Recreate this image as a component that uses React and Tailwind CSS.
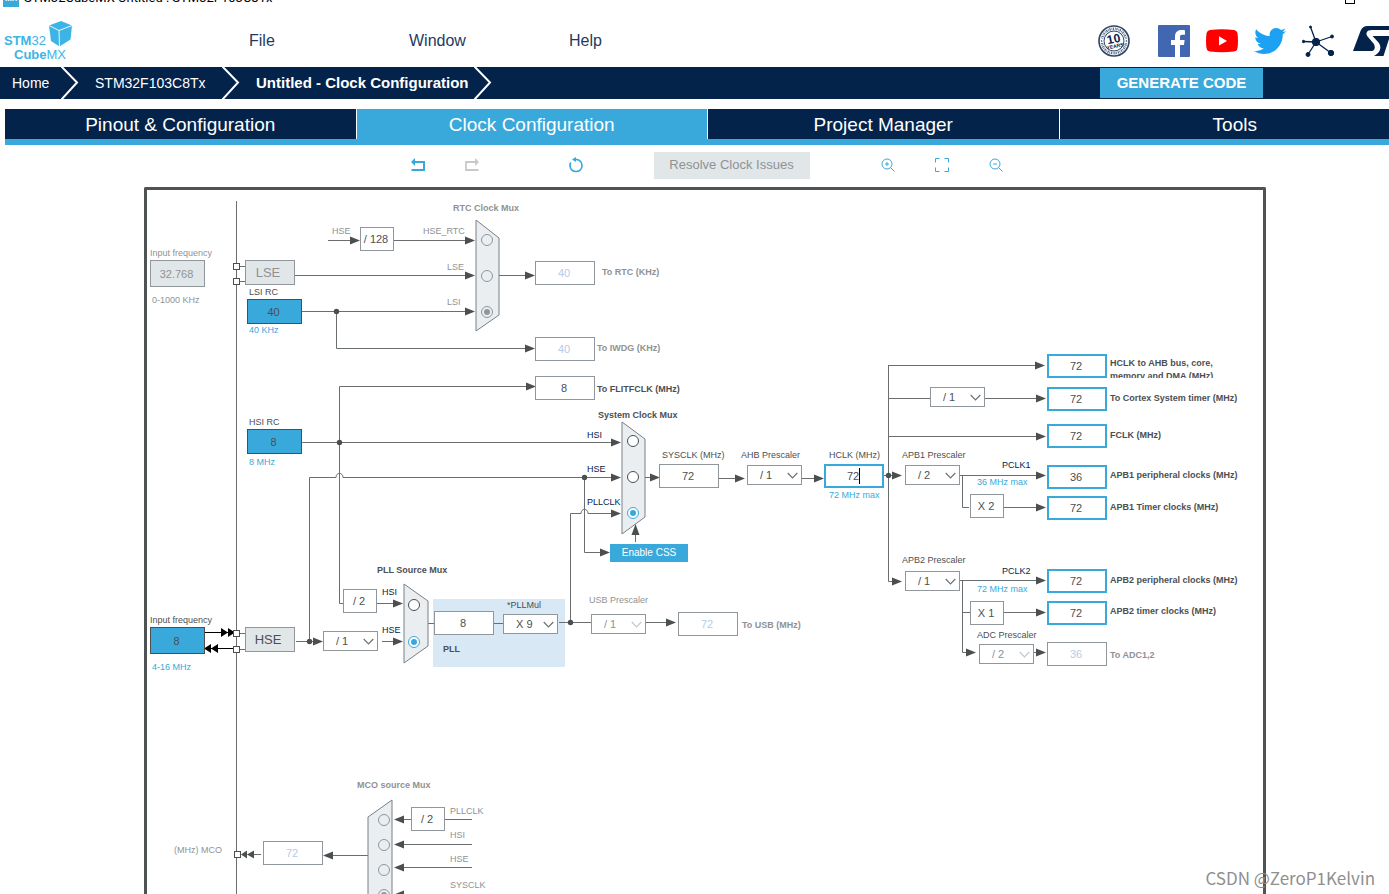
import React, { useState } from 'react'
import { FaTwitter } from 'react-icons/fa'

// top left corner of the board inside its frame
const ORIGIN = { x: 147, y: 190 };

const TONES = {
  dark: "text-[#4c4f52]",
  gray: "text-[#8f9295]",
  navy: "text-[#03234b]",
  blue: "text-[#39a9dc]",
};

const BOX_STYLES = {
  source: "bg-[#39a9dc] border border-[#4c4f52] text-[#4c4f52]",
  disabled: "bg-[#e1e6e9] border border-[#8f979d] text-[#8f9295]",
  plain: "bg-white border border-[#8f979d] text-[#4c4f52]",
  faded: "bg-white border border-[#8f979d] text-[#b4cce6]",
  output: "bg-white border-2 border-[#39a9dc] text-[#4c4f52]",
};

const VALUES = [
  { id: "lse-freq", x: 150, y: 260, w: 55, h: 27, value: "32.768", kind: "disabled" },
  { id: "lsi-rc", x: 247, y: 299, w: 55, h: 25, value: "40", kind: "source" },
  { id: "hsi-rc", x: 247, y: 429, w: 55, h: 25, value: "8", kind: "source" },
  { id: "hse-freq", x: 150, y: 627, w: 55, h: 27, value: "8", kind: "source" },
  { id: "rtc", x: 535, y: 261, value: "40", kind: "faded" },
  { id: "iwdg", x: 535, y: 337, value: "40", kind: "faded" },
  { id: "flitfclk", x: 535, y: 376, value: "8", kind: "plain" },
  { id: "sysclk", x: 659, y: 464, value: "72", kind: "plain" },
  { id: "hclk", x: 824, y: 464, value: "72", kind: "output" },
  { id: "pll-in", x: 434, y: 611, value: "8", kind: "plain" },
  { id: "usb", x: 678, y: 612, value: "72", kind: "faded" },
  { id: "ahb-bus", x: 1047, y: 354, value: "72", kind: "output" },
  { id: "cortex", x: 1047, y: 387, value: "72", kind: "output" },
  { id: "fclk", x: 1047, y: 424, value: "72", kind: "output" },
  { id: "apb1-per", x: 1047, y: 465, value: "36", kind: "output" },
  { id: "apb1-tim", x: 1047, y: 496, value: "72", kind: "output" },
  { id: "apb2-per", x: 1047, y: 569, value: "72", kind: "output" },
  { id: "apb2-tim", x: 1047, y: 601, value: "72", kind: "output" },
  { id: "adc", x: 1047, y: 642, value: "36", kind: "faded" },
  { id: "mco", x: 263, y: 841, value: "72", kind: "faded" },
];

const SELECTS = [
  { id: "ahb-pre", x: 747, y: 465, options: ["/ 1", "/ 2", "/ 4", "/ 8"], value: "/ 1" },
  { id: "apb1-pre", x: 905, y: 465, options: ["/ 1", "/ 2", "/ 4", "/ 8"], value: "/ 2" },
  { id: "cortex-pre", x: 930, y: 387, options: ["/ 1", "/ 8"], value: "/ 1", name: "Cortex prescaler" },
  { id: "apb2-pre", x: 905, y: 571, options: ["/ 1", "/ 2", "/ 4", "/ 8"], value: "/ 1" },
  { id: "pll-mul", x: 503, y: 614, options: ["X 2", "X 4", "X 8", "X 9"], value: "X 9" },
  { id: "hse-pre", x: 323, y: 631, options: ["/ 1", "/ 2"], value: "/ 1", name: "HSE prescaler" },
  { id: "usb-pre", x: 591, y: 614, options: ["/ 1", "/ 1.5"], value: "/ 1", disabled: true },
  { id: "adc-pre", x: 979, y: 644, options: ["/ 2", "/ 4"], value: "/ 2", disabled: true },
];

const FIXED = [
  { x: 360, y: 227, text: "/ 128" },
  { x: 343, y: 589, text: "/ 2" },
  { x: 970, y: 494, text: "X 2" },
  { x: 970, y: 601, text: "X 1" },
  { x: 411, y: 807, text: "/ 2" },
];

// y is the middle of the line of text
const LABELS = [
  { x: 453, y: 208, text: "RTC Clock Mux", tone: "gray", bold: true },
  { x: 598, y: 415, text: "System Clock Mux", tone: "dark", bold: true },
  { x: 377, y: 570, text: "PLL Source Mux", tone: "dark", bold: true },
  { x: 357, y: 785, text: "MCO source Mux", tone: "gray", bold: true },
  { x: 443, y: 649, text: "PLL", tone: "dark", bold: true },
  { x: 150, y: 253, text: "Input frequency", tone: "gray", htmlFor: "lse-freq" },
  { x: 152, y: 300, text: "0-1000 KHz", tone: "gray" },
  { x: 249, y: 292, text: "LSI RC", tone: "dark", htmlFor: "lsi-rc" },
  { x: 249, y: 330, text: "40 KHz", tone: "blue" },
  { x: 249, y: 422, text: "HSI RC", tone: "dark", htmlFor: "hsi-rc" },
  { x: 249, y: 462, text: "8 MHz", tone: "blue" },
  { x: 150, y: 620, text: "Input frequency", tone: "dark", htmlFor: "hse-freq" },
  { x: 152, y: 667, text: "4-16 MHz", tone: "blue" },
  { x: 332, y: 231, text: "HSE", tone: "gray" },
  { x: 423, y: 231, text: "HSE_RTC", tone: "gray", htmlFor: "rtc-0" },
  { x: 447, y: 267, text: "LSE", tone: "gray", htmlFor: "rtc-1" },
  { x: 447, y: 302, text: "LSI", tone: "gray", htmlFor: "rtc-2" },
  { x: 587, y: 435, text: "HSI", tone: "navy", htmlFor: "sys-0" },
  { x: 587, y: 469, text: "HSE", tone: "navy", htmlFor: "sys-1" },
  { x: 587, y: 502, text: "PLLCLK", tone: "navy", htmlFor: "sys-2" },
  { x: 382, y: 592, text: "HSI", tone: "navy", htmlFor: "pll-0" },
  { x: 382, y: 630, text: "HSE", tone: "navy", htmlFor: "pll-1" },
  { x: 507, y: 605, text: "*PLLMul", tone: "dark", htmlFor: "pll-mul" },
  { x: 589, y: 600, text: "USB Prescaler", tone: "gray", htmlFor: "usb-pre" },
  { x: 662, y: 455, text: "SYSCLK (MHz)", tone: "dark", htmlFor: "sysclk" },
  { x: 741, y: 455, text: "AHB Prescaler", tone: "dark", htmlFor: "ahb-pre" },
  { x: 829, y: 455, text: "HCLK (MHz)", tone: "dark", htmlFor: "hclk" },
  { x: 829, y: 495, text: "72 MHz max", tone: "blue" },
  { x: 902, y: 455, text: "APB1 Prescaler", tone: "dark", htmlFor: "apb1-pre" },
  { x: 1002, y: 465, text: "PCLK1", tone: "navy" },
  { x: 977, y: 482, text: "36 MHz max", tone: "blue" },
  { x: 902, y: 560, text: "APB2 Prescaler", tone: "dark", htmlFor: "apb2-pre" },
  { x: 1002, y: 571, text: "PCLK2", tone: "navy" },
  { x: 977, y: 589, text: "72 MHz max", tone: "blue" },
  { x: 977, y: 635, text: "ADC Prescaler", tone: "dark", htmlFor: "adc-pre" },
  { x: 602, y: 272, text: "To RTC (KHz)", tone: "gray", bold: true, htmlFor: "rtc" },
  { x: 597, y: 348, text: "To IWDG (KHz)", tone: "gray", bold: true, htmlFor: "iwdg" },
  { x: 597, y: 389, text: "To FLITFCLK (MHz)", tone: "dark", bold: true, htmlFor: "flitfclk" },
  { x: 742, y: 625, text: "To USB (MHz)", tone: "gray", bold: true, htmlFor: "usb" },
  { x: 1110, y: 398, text: "To Cortex System timer (MHz)", tone: "dark", bold: true, htmlFor: "cortex" },
  { x: 1110, y: 435, text: "FCLK (MHz)", tone: "dark", bold: true, htmlFor: "fclk" },
  { x: 1110, y: 475, text: "APB1 peripheral clocks (MHz)", tone: "dark", bold: true, htmlFor: "apb1-per" },
  { x: 1110, y: 507, text: "APB1 Timer clocks (MHz)", tone: "dark", bold: true, htmlFor: "apb1-tim" },
  { x: 1110, y: 580, text: "APB2 peripheral clocks (MHz)", tone: "dark", bold: true, htmlFor: "apb2-per" },
  { x: 1110, y: 611, text: "APB2 timer clocks (MHz)", tone: "dark", bold: true, htmlFor: "apb2-tim" },
  { x: 1110, y: 655, text: "To ADC1,2", tone: "gray", bold: true, htmlFor: "adc" },
  { x: 174, y: 850, text: "(MHz) MCO", tone: "gray", htmlFor: "mco" },
  { x: 450, y: 811, text: "PLLCLK", tone: "gray", htmlFor: "mco-0" },
  { x: 450, y: 835, text: "HSI", tone: "gray", htmlFor: "mco-1" },
  { x: 450, y: 859, text: "HSE", tone: "gray", htmlFor: "mco-2" },
  { x: 450, y: 885, text: "SYSCLK", tone: "gray", htmlFor: "mco-3" },
];

const MUXES = [
  { id: "rtc", cx: 487, ys: [240, 276, 312], selected: 2, disabled: true },
  { id: "sys", cx: 633, ys: [441, 477, 513], selected: 2 },
  { id: "pll", cx: 414, ys: [605, 642], selected: 1 },
  { id: "mco", cx: 384, ys: [820, 845, 870, 895], selected: 3, disabled: true },
];

const MUX_SHAPES = [
  "476,220 499,238 499,315 476,331",
  "622,422 645,439 645,517 622,534",
  "404,584 428,601 428,646 404,663",
  "392,800 368,817 368,920 392,920",
];

const WIRES = [
  "M236.5 201V900",
  "M328 240.5H352",
  "M394 240.5H470",
  "M295 275.5H470",
  "M302 311.5H470M336.5 311V348.5H530",
  "M499 275.5H530",
  "M302 442.5H615M339.5 603.5V386.5H530M339.5 603.5H343",
  "M309.5 641V477.5H336C336 472 343 472 343 477.5H615",
  "M584.5 477V552.5H604",
  "M377 603.5H398M382 641.5H398M296 641.5H318",
  "M428 623.5H434M494 623.5H503M559 622.5H591",
  "M570.5 622V513.5H581C581 508 588 508 588 513.5H615",
  "M645 477.5H655M635.5 542V530",
  "M719 478.5H740M802 478.5H819M646 622.5H671",
  "M884 475.5H897M888.5 365V581.5H897",
  "M888 365.5H1040M888 398.5H930M985 398.5H1040M888 436.5H1040",
  "M960 475.5H1040M962.5 475V507.5H969M1004 507.5H1040",
  "M960 580.5H1040M962.5 580V652.5H971M962 612.5H970M1004 612.5H1040M1034 652.5H1040",
  "M240 266.5H245M240 281.5H245M240 633.5H245M240 649.5H245",
  "M368 855.5H328M261 854.5H248",
  "M472 819.5H399M472 844.5H399M472 867.5H399M472 894.5H399",
];

const RIGHT_ARROWS = [
  [360, 240], [475, 240], [475, 275], [475, 311], [535, 275], [535, 348], [536, 386],
  [621, 442], [621, 477], [621, 513], [610, 552], [403, 603], [403, 641], [323, 641],
  [660, 477], [745, 478], [824, 478], [676, 622], [902, 475], [902, 581], [1045, 365],
  [1046, 398], [1046, 436], [1046, 475], [1046, 507], [1046, 580], [1046, 612],
  [976, 652], [1046, 652],
];

const LEFT_ARROWS = [[323, 855], [394, 819], [394, 844], [394, 867], [394, 894]];

const DOTS = [[336.5, 311.5], [339.5, 442.5], [309.5, 641.5], [584.5, 477.5], [570.5, 622.5], [888.5, 475.5]];

const PINS = [[233, 263], [233, 278], [233, 630], [233, 646], [234, 851]];

const place = (x, y) => ({ left: x - ORIGIN.x, top: y - ORIGIN.y });

const ValueBox = ({ id, x, y, w = 60, h = 24, value, kind }) => {
  const [text, setText] = useState(value);
  return (
    <input
      id={id}
      type="text"
      value={text}
      disabled={kind === "disabled" || kind === "faded"}
      onChange={(e) => setText(e.target.value)}
      className={"absolute text-center text-[11px] pr-0.5 outline-none " + BOX_STYLES[kind]}
      style={{ ...place(x, y), width: w, height: h }}
    />
  );
}

const SelectBox = ({ id, x, y, options, value, name, disabled }) => {
  return (
    <div className={"absolute w-[55px] h-5 " + (disabled ? "text-[#8f9295]" : "text-[#4c4f52]")} style={place(x, y)}>
      <select
        id={id}
        defaultValue={value}
        disabled={disabled}
        aria-label={name}
        className="block appearance-none w-full h-full bg-white border border-[#8f979d] pl-3 text-[11px] leading-[18px] outline-none"
      >
        {options.map((o) => <option key={o}>{o}</option>)}
      </select>
      <svg
        className={"absolute right-1 top-[7px] w-[11px] h-[7px] pointer-events-none " + (disabled ? "text-[#c4c8cb]" : "text-[#6c7175]")}
        viewBox="0 0 11 7" fill="none" stroke="currentColor" strokeWidth="1.200"
      >
        <path d="M.7 1L5.5 5.8L10.3 1" />
      </svg>
    </div>
  );
}

const Mux = ({ id, cx, ys, selected, disabled }) => {
  const [current, setCurrent] = useState(selected);
  return ys.map((cy, i) => (
    <input
      key={id + i}
      id={id + "-" + i}
      type="radio"
      name={id}
      checked={current === i}
      disabled={disabled}
      onChange={() => setCurrent(i)}
      className={
        "absolute appearance-none w-3 h-3 rounded-full border bg-clip-content p-[2px] " +
        (disabled
          ? "border-[#8f979d] checked:bg-[#8f979d]"
          : "border-[#4c4f52] bg-white checked:border-[#39a9dc] checked:bg-[#39a9dc]")
      }
      style={place(cx - 6, cy - 6)}
    />
  ));
}

const BoardText = ({ x, y, text, tone, bold, htmlFor }) => {
  const Tag = htmlFor ? "label" : "span";
  return (
    <Tag
      htmlFor={htmlFor}
      className={"absolute whitespace-nowrap text-[9px] leading-3 " + TONES[tone] + (bold ? " font-bold" : "")}
      style={place(x, y - 6)}
    >
      {text}
    </Tag>
  );
}

const Wires = () => {
  return (
    <svg className="absolute inset-0 w-full h-full">
      <g transform={`translate(${-ORIGIN.x} ${-ORIGIN.y})`}>
        <g fill="none" stroke="#6b6e70">
          {WIRES.map((d) => <path key={d} d={d} />)}
        </g>
        <g fill="#eaeef1" stroke="#7b8085">
          {MUX_SHAPES.map((p) => <polygon key={p} points={p} />)}
        </g>
        {/* white backing of the selectable inputs */}
        <g fill="#fff">
          {MUXES.filter((m) => !m.disabled).map((m) =>
            m.ys.map((cy) => <circle key={m.id + cy} cx={m.cx} cy={cy} r="5.5" />)
          )}
        </g>
        <g fill="#4c4f50">
          {RIGHT_ARROWS.map(([x, y]) => (
            <path key={x + "-" + y} d={`M${x} ${y + 0.5}l-10 -4v8z`} />
          ))}
          {LEFT_ARROWS.map(([x, y]) => (
            <path key={x + "-" + y} d={`M${x} ${y + 0.5}l10 -4v8z`} />
          ))}
          <path d="M635.5 524l-4 11h8z" />
          <path d="M241 854.5l6 -4v8zM247 854.5l7 -4v8z" />
          {DOTS.map(([x, y]) => <circle key={x} cx={x} cy={y} r="2.7" />)}
        </g>
        {/* external crystal */}
        <path d="M205 632.5H233M205 648.5H233" stroke="#000" />
        <path d="M228 632.5l-7 -4.500v9zM235 632.5l-7 -4.500v9zM204 648.5l7 -4.500v9zM211 648.5l7 -4.500v9z" fill="#000" />
        <g fill="#fff" stroke="#4c4f50">
          {PINS.map(([x, y]) => <rect key={x + "-" + y} x={x + 0.5} y={y + 0.5} width="6" height="6" />)}
        </g>
      </g>
    </svg>
  );
}

const Board = () => {
  return (
    <main className="relative flex-1 ml-36 mr-[123px] border-3 border-b-0 border-[#4f5354] rounded-t-xs overflow-hidden">
      <div className="absolute w-[132px] h-[68px] bg-[#d8e8f5]" style={place(433, 599)} />
      <Wires />
      <div className="absolute w-[50px] h-[25px] flex items-center justify-center bg-[#e1e6e9] border border-[#8f979d] text-[13px] text-[#8f9295] pr-1" style={place(245, 260)}>
        LSE
      </div>
      <div className="absolute w-[50px] h-[25px] flex items-center justify-center bg-[#e1e6e9] border border-[#8f979d] text-[13px] text-[#4c4f52] pr-1" style={place(245, 627)}>
        HSE
      </div>
      {FIXED.map((f) => (
        <div
          key={f.x + "-" + f.y}
          className="absolute w-[34px] h-6 flex items-center justify-center bg-white border border-[#8f979d] text-[11px] text-[#4c4f52] pr-0.5"
          style={place(f.x, f.y)}
        >
          {f.text}
        </div>
      ))}
      {VALUES.map((v) => <ValueBox key={v.id} {...v} />)}
      {/* text caret of the field being edited */}
      <div className="absolute w-px h-4 bg-black" style={place(859, 468)} />
      {SELECTS.map((s) => <SelectBox key={s.id} {...s} />)}
      {MUXES.map((m) => <Mux key={m.id} {...m} />)}
      {LABELS.map((l) => <BoardText key={l.x + "-" + l.y} {...l} />)}
      <label
        htmlFor="ahb-bus"
        className="absolute w-32 h-[21px] overflow-hidden text-[9px] leading-[13px] font-bold text-[#4c4f52]"
        style={place(1110, 357)}
      >
        HCLK to AHB bus, core,<br />memory and DMA (MHz)
      </label>
      <button className="absolute w-[78px] h-[18px] bg-[#39a9dc] text-white text-[10px] leading-[18px]" style={place(610, 544)}>
        Enable CSS
      </button>
    </main>
  );
}

const Logo = () => {
  return (
    <a href="#" aria-label="STM32CubeMX" className="relative w-[76px] h-full pl-1 pt-[27px] text-[13px] leading-[14px] text-[#3cb4e6]">
      <div><b>STM</b>32</div>
      <div className="pl-2.5"><b>Cube</b>MX</div>
      <svg className="absolute left-12 top-3.5 w-6 h-[26px]" viewBox="0 0 24 26">
        <path d="M1 4.500L13 0L24 4.500L22.500 18.500L11.500 25.500L3 20z" fill="#3cb4e6" />
        <path d="M1 4.500L11 9.500L24 4.500M11 9.500L11.500 25.500" stroke="#fff" strokeWidth=".9" fill="none" />
      </svg>
    </a>
  );
}

const Socials = () => {
  return (
    <div className="ml-auto pt-2 flex items-center gap-4 overflow-hidden text-[#03234b]">
      <a href="#" aria-label="10 years" className="mr-3">
        <svg className="w-8 h-8" viewBox="0 0 32 32" fill="none" stroke="#2f4566">
          <circle cx="16" cy="16" r="15" strokeWidth="1.600" />
          <circle cx="16" cy="16" r="12.200" strokeWidth="2.600" strokeDasharray="1.200 .9 .7 .7" stroke="#5d6e87" />
          <circle cx="16" cy="16" r="10" />
          <path d="M3.800 18a12.200 12.200 0 0 1 0 -4M28.200 18a12.200 12.200 0 0 0 0 -4" stroke="#fff" strokeWidth="3" />
          <circle cx="3.600" cy="16" r=".8" fill="#2f4566" stroke="none" />
          <circle cx="28.400" cy="16" r=".8" fill="#2f4566" stroke="none" />
          <g transform="rotate(-12 16 16)" fill="#03234b" stroke="none" fontFamily="Liberation Sans" fontWeight="bold" textAnchor="middle">
            <text x="16" y="18" fontSize="12">10</text>
            <text x="16" y="23" fontSize="5">YEARS</text>
          </g>
        </svg>
      </a>
      <a href="#" aria-label="Facebook">
        <svg className="w-8 h-8" viewBox="0 0 32 32">
          <rect width="32" height="32" rx="1" fill="#4267b2" />
          <path d="M22 32V20h4l.6 -5H22v-3c0 -1.400 .4 -2.300 2.400 -2.300H27V5.200C26.500 5.100 25 5 23.300 5c-3.700 0 -6.300 2.300 -6.300 6.500V15h-4v5h4v12z" fill="#fff" />
        </svg>
      </a>
      <a href="#" aria-label="YouTube">
        <svg className="w-8 h-8" viewBox="0 0 32 32">
          <path d="M4 5Q16 3.500 28 5Q31 5.500 31.500 8.500Q32.500 16 31.500 23Q31 26 28 26.500Q16 28 4 26.500Q1 26 .5 23Q-.5 16 .5 8.500Q1 5.500 4 5z" fill="#f00" />
          <path d="M13 11.200L21 16L13 20.500z" fill="#fff" />
        </svg>
      </a>
      <a href="#" aria-label="Twitter">
        <FaTwitter className="w-8 h-8 text-[#1da1f2]" />
      </a>
      <a href="#" aria-label="Community">
        <svg className="w-8 h-8" viewBox="0 0 32 32" fill="currentColor" stroke="currentColor">
          <path d="M14 17L8.500 2M14 17L30 11.500M14 17L1.500 16.500M14 17L6 29.500M14 17L29 28" strokeWidth="1.300" />
          <circle cx="14" cy="17" r="3.700" />
          <circle cx="8.500" cy="2" r="1" />
          <circle cx="30" cy="11.500" r="1.500" />
          <circle cx="1.500" cy="16.500" r="1.200" />
          <circle cx="6" cy="29.500" r="2" />
          <circle cx="29" cy="28" r="2.700" />
        </svg>
      </a>
      <a href="#" aria-label="ST" className="ml-0.5">
        <svg className="w-[37px] h-8" viewBox="0 0 37 32">
          <path d="M1 26L8.500 6Q10.500 1 15.500 1H37V5H20C14.500 5 13 8.500 16 12L21.500 18.500C24 22 22.500 26 20 26z" fill="currentColor" />
          <path d="M20.500 11H37V14L31.500 31H22C28.500 27.500 30 22 26.500 17.500z" fill="currentColor" />
        </svg>
      </a>
    </div>
  );
}

const CrumbArrow = () => (
  <svg className="w-[18px] h-8 shrink-0" viewBox="0 0 18 32" fill="none" stroke="#fff" strokeWidth="2">
    <path d="M0 -1L16 15.500L0 33" />
  </svg>
)

const Breadcrumbs = () => {
  return (
    <nav className="h-8 flex items-center bg-[#03234b] text-white text-sm">
      <a href="#" className="pl-3 w-[61px]">Home</a>
      <CrumbArrow />
      <a href="#" className="pl-4 w-[143px]">STM32F103C8Tx</a>
      <CrumbArrow />
      <a href="#" className="pl-4 w-[234px] text-[15px] font-bold whitespace-nowrap">Untitled - Clock Configuration</a>
      <CrumbArrow />
      <button className="ml-auto mr-[126px] w-[163px] h-[30px] bg-[#39a9dc] text-[15px] font-bold">
        GENERATE CODE
      </button>
    </nav>
  );
}

const TABS = ["Pinout & Configuration", "Clock Configuration", "Project Manager", "Tools"];

const Tabs = () => {
  const [active, setActive] = useState(1);
  return (
    <div role="tablist" className="mt-2.5 ml-[5px] -mr-[22px] grid grid-cols-4 border-b-6 border-[#39a9dc]">
      {TABS.map((tab, i) => (
        <button
          key={tab}
          role="tab"
          aria-selected={i === active}
          onClick={() => setActive(i)}
          className={
            "h-[30px] pt-0.5 text-[19px] text-white border-r border-white " +
            (i === active ? "bg-[#39a9dc]" : "bg-[#03234b]")
          }
        >
          {tab}
        </button>
      ))}
    </div>
  );
}

const Toolbar = () => {
  return (
    <div className="h-[42px] pb-0.5 flex items-center justify-center pl-6 text-[#39a9dc]">
      <button aria-label="Undo">
        <svg className="w-3.5 h-3.5" viewBox="0 0 14 14" fill="none" stroke="currentColor" strokeWidth="2">
          <path d="M.5 12H13V4H3" />
          <path d="M0 4L4 0V8z" fill="currentColor" stroke="none" />
        </svg>
      </button>
      <button aria-label="Redo" disabled className="ml-10 text-[#c9c9c9]">
        <svg className="w-3.5 h-3.5" viewBox="0 0 14 14" fill="none" stroke="currentColor" strokeWidth="1.800">
          <path d="M13.500 12H1V4H11" />
          <path d="M14 4L10 0V8z" fill="currentColor" stroke="none" />
        </svg>
      </button>
      <button aria-label="Reset" className="ml-[90px]">
        <svg className="w-3.5 h-4" viewBox="0 0 14 16" fill="none" stroke="currentColor" strokeWidth="1.700">
          <path d="M5 2.500C9.500 1.500 13 4.500 13 8.500C13 12 10.500 14.500 7 14.500C3.500 14.500 1 12 1 8.500Q1 7 1.800 5.500" />
          <path d="M3 2.500L7 0V5z" fill="currentColor" stroke="none" />
        </svg>
      </button>
      <button disabled className="mx-[71px] w-[156px] h-[27px] bg-[#e1e6e9] text-[13px] text-[#8f9295]">
        Resolve Clock Issues
      </button>
      <button aria-label="Zoom in">
        <svg className="w-3.5 h-3.5" viewBox="0 0 14 14" fill="none" stroke="currentColor">
          <circle cx="6" cy="6" r="5" />
          <path d="M9.500 9.500L13.500 13.500M6 4V8M4 6H8" />
        </svg>
      </button>
      <button aria-label="Fit to screen" className="mx-10">
        <svg className="w-3.5 h-3.5" viewBox="0 0 14 14" fill="none" stroke="currentColor">
          <path d="M.5 4.500V.5H4.500M9.500 .5H13.500V4.500M13.500 9.500V13.500H9.500M4.500 13.500H.5V9.500" />
        </svg>
      </button>
      <button aria-label="Zoom out">
        <svg className="w-3.5 h-3.5" viewBox="0 0 14 14" fill="none" stroke="currentColor">
          <circle cx="6" cy="6" r="5" />
          <path d="M9.500 9.500L13.500 13.500M4 6H8" />
        </svg>
      </button>
    </div>
  );
}

const App = () => {
  return (
    <div className="relative h-screen flex flex-col overflow-hidden bg-white font-['Liberation_Sans',Arial,sans-serif]">
      {/* Window title */}
      <div className="h-[7px] flex items-end overflow-hidden pl-[3px] pr-[34px] text-black">
        <span className="w-4 h-4 shrink-0 bg-[#39a9dc] text-white text-[8px] leading-4 font-bold text-center">MX</span>
        <span className="ml-[5px] text-[13px] leading-[18px] font-['Roboto',sans-serif]">STM32CubeMX Untitled : STM32F103C8Tx</span>
        <span className="ml-auto mb-[3px] w-2.5 h-2.5 border border-black" />
      </div>

      <header className="h-[60px] flex text-base text-[#1f3a60]">
        <Logo />
        <nav className="flex items-center pl-[173px] pt-2 [&>a]:w-40">
          <a href="#">File</a>
          <a href="#">Window</a>
          <a href="#">Help</a>
        </nav>
        <Socials />
      </header>

      <Breadcrumbs />
      <Tabs />
      <Toolbar />
      <Board />

      <div className="absolute right-3.5 bottom-1 text-[17px] leading-6 text-[#8f8f8f] font-['Noto_Sans_CJK_SC',sans-serif]">
        CSDN @ZeroP1Kelvin
      </div>
    </div>
  )
}

export default App;
